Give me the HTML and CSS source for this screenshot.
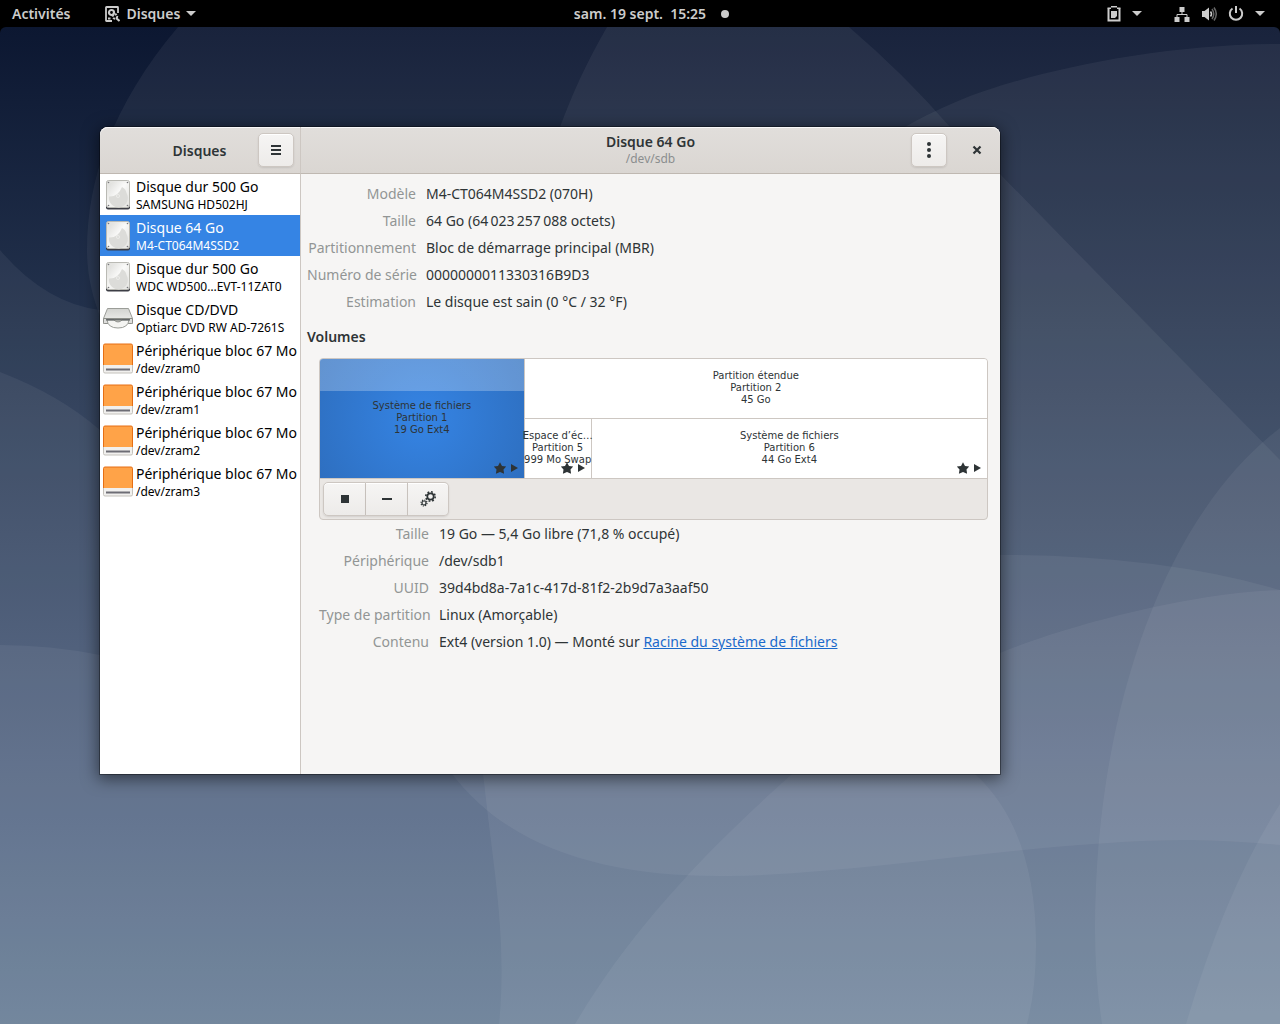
FILE: index.html
```html
<!DOCTYPE html>
<html lang="fr">
<head>
<meta charset="utf-8">
<meta name="viewport" content="width=device-width, initial-scale=1">
<title>Disques</title>
<link rel="stylesheet" href="styles.css">
</head>
<body>
<svg class="defs" aria-hidden="true">
  <defs>
    <linearGradient id="plate" x1="0" y1="0" x2="1" y2="1">
      <stop offset="0" stop-color="#dededb"/><stop offset=".5" stop-color="#f6f6f4"/><stop offset="1" stop-color="#e4e4e1"/>
    </linearGradient>
    <linearGradient id="shine" x1="0" y1="0" x2="1" y2="1">
      <stop offset="0" stop-color="#dcdcd9"/><stop offset=".5" stop-color="#fafaf9"/><stop offset="1" stop-color="#e2e2df"/>
    </linearGradient>
    <linearGradient id="tray" x1="0" y1="0" x2="0" y2="1">
      <stop offset="0" stop-color="#d2d3d0"/><stop offset="1" stop-color="#f2f2f0"/>
    </linearGradient>
    <symbol id="i-hdd" viewBox="0 0 32 32">
      <rect x="4" y="3" width="24" height="27.500" rx="2" fill="#3c3d45"/>
      <rect x="4.500" y="1.500" width="23" height="27" rx="2" fill="url(#plate)" stroke="#babab4"/>
      <path d="M7.500 5q3-3 8.500-2.500t8.500 2v9q2 8-3 11.500t-11 0q-5-4-3-10.500z" fill="url(#shine)"/>
      <path d="M24.500 14A9.500 9.500 0 1 1 7 17.500Q16 18 20 8q4 2 4.500 6z" fill="#dcdcd9"/>
      <circle cx="16" cy="17" r="1.800" fill="#f1f1ef"/><circle cx="16" cy="17" r=".8" fill="#c8c8c3"/>
      <g fill="#77777a"><circle cx="6.500" cy="3.500" r=".8"/><circle cx="25.500" cy="3.500" r=".8"/><circle cx="6.500" cy="26.500" r=".8"/><circle cx="25.500" cy="26.500" r=".8"/></g>
    </symbol>
    <symbol id="i-optical" viewBox="0 0 32 32">
      <path d="M5.500 6.500h21l4 10v5h-29v-5z" fill="url(#tray)" stroke="#9b9d98"/>
      <path d="M1.500 16.500h29v4q0 1-1 1h-27q-1 0-1-1z" fill="#dededc" stroke="#8d8f8a"/>
      <path d="M5 18h22q-1 8-11 8T5 18z" fill="#f4f4f2" stroke="#9a9c97"/>
      <path d="M4 17.800h24" stroke="#4d5154" stroke-width="1.200"/>
      <path d="M12 18q4 4 8 0z" fill="#b9bbb6" stroke="#777975" stroke-width=".7"/>
    </symbol>
    <symbol id="i-block" viewBox="0 0 32 32">
      <rect x="1.500" y="16" width="29" height="14" rx="1.500" fill="#f1f0ee" stroke="#c4c2bc"/>
      <path d="M1.500 22V2.500Q1.500 1 3 1h26q1.500 0 1.500 1.500V22z" fill="#ffa348"/>
      <path d="M1.500 22V2.500Q1.500 1 3 1h26q1.500 0 1.500 1.500V22" fill="none" stroke="#e66f14"/>
      <path d="M4 26.500h24" stroke="#6d6d75" stroke-width="2"/>
    </symbol>
    <symbol id="i-caret" viewBox="0 0 10 5"><path d="M0 0h10L5 5z" fill="currentColor"/></symbol>
    <symbol id="i-mounted" viewBox="0 0 28 12">
      <path d="M6 .3L8 4l4.200.6L9.500 7.500l.6 4.300L6 10l-4.100 1.800.6-4.300L-.2 4.600 4 4z" fill="currentColor"/>
      <path d="M17 2v8l7-4z" fill="currentColor"/>
    </symbol>
  </defs>
</svg>

<header class="topbar">
  <nav class="topbar-start">
    <button class="top-item" type="button">Activités</button>
    <button class="top-item app-menu" type="button">
      <svg class="glyph" viewBox="0 0 16 16" fill="none" stroke="currentColor">
        <path d="M8 15H2.500Q2 15 2 14.500v-13Q2 1 2.500 1h11Q14 1 14 1.500V7" stroke-width="1.800"/>
        <circle cx="7.500" cy="6.500" r="2.500" stroke-width="2.200"/>
        <circle cx="11" cy="10.500" r="2.200" stroke-width="2" stroke-dasharray="2 1"/>
        <path d="M12 12l3.500 3M4 12.500h2.500" stroke-width="2"/>
      </svg>
      Disques
      <svg class="caret"><use href="#i-caret"/></svg>
    </button>
  </nav>
  <button class="top-item clock" type="button">sam. 19 sept.&nbsp; 15:25<span class="dot"></span></button>
  <div class="topbar-end">
    <button class="top-item status" type="button" aria-label="Presse-papiers">
      <svg class="glyph" viewBox="0 0 16 16"><path d="M2.500 2.500v12h11v-12" fill="none" stroke="currentColor" stroke-width="2"/><path d="M5 0h6v3h3.500V1.500h-13V3H5zM5 5h6v5l-2 2H5z" fill="currentColor"/></svg>
      <svg class="caret"><use href="#i-caret"/></svg>
    </button>
    <button class="top-item status system" type="button" aria-label="Système">
      <svg class="glyph" viewBox="0 0 16 16" fill="currentColor"><path d="M5.500 1h5v5h-5zM.5 11h5v5h-5zM10.500 11h5v5h-5z"/><path d="M8 6v3M3 11V8.500h10V11" fill="none" stroke="currentColor"/></svg>
      <svg class="glyph" viewBox="0 0 16 16"><path d="M1 5h2.500L8 1.500v13L3.500 11H1z" fill="currentColor"/><path d="M9.500 5.500q2 2.500 0 5" fill="none" stroke="currentColor" stroke-width="1.500"/><path d="M11 3q3.500 5 0 10M13 1.500q4.500 6.500 0 13" fill="none" stroke="#666" stroke-width="1.500"/></svg>
      <svg class="glyph" viewBox="0 0 16 16" fill="none" stroke="currentColor" stroke-width="2"><path d="M4.500 2.500a6.200 6.200 0 1 0 7 0M8 0v7"/></svg>
      <svg class="caret"><use href="#i-caret"/></svg>
    </button>
  </div>
</header>

<main class="desktop">
  <svg class="wallpaper" viewBox="0 27 1280 997" preserveAspectRatio="none" aria-hidden="true">
    <g fill="#fff" fill-opacity=".055">
      <path d="M178 27C112 105 87 180 87 250C87 460 470 560 483 774C495 880 507 940 499 1024H1280V27z"/>
      <path d="M607 27C585 65 572 95 560 127C480 350 390 640 452 774C510 850 610 878 730 876C870 874 1040 840 1190 840Q1240 841 1280 845V460L1000 174Q975 150 950 127Q905 75 849 27z"/>
      <path d="M1280 44C1150 44 1020 75 958 101Q925 115 905 127C850 300 880 650 792 774C690 865 625 940 575 1024H1280z"/>
      <path d="M0 250Q45 303 100 310C300 320 700 555 1000 555Q1160 555 1280 590V1024H0z"/>
      <path d="M0 372Q60 395 100 430C300 600 700 760 1000 653C1060 628 1190 592 1280 590V1024H0z"/>
      <path d="M0 645Q50 645 100 655C300 680 700 640 975 774Q1036 830 1036 945Q1036 990 1027 1024H0z"/>
      <path d="M1280 428C1160 520 1095 720 1095 929Q1095 980 1102 1024H1280z"/>
      <path d="M1280 804Q1225 890 1186 1024H1280z"/>
    </g>
  </svg>

  <section class="window" aria-label="Disques">
    <div class="head head-side">
      <h2 class="title side-title">Disques</h2>
      <button class="btn head-btn" type="button" aria-label="Menu">
        <svg class="icon" viewBox="0 0 16 16"><path d="M3 4h10M3 8h10M3 12h10" stroke="currentColor" stroke-width="2"/></svg>
      </button>
    </div>
    <div class="head head-main">
      <div class="head-title">
        <h1 class="title">Disque 64 Go</h1>
        <p class="subtitle">/dev/sdb</p>
      </div>
      <div class="head-actions">
        <button class="btn head-btn" type="button" aria-label="Options du disque">
          <svg class="icon" viewBox="0 0 16 16" fill="currentColor"><circle cx="8" cy="2" r="2"/><circle cx="8" cy="8" r="2"/><circle cx="8" cy="14" r="2"/></svg>
        </button>
        <button class="close" type="button" aria-label="Fermer">
          <svg class="icon" viewBox="0 0 16 16"><path d="M4.500 4.500l7 7M11.500 4.500l-7 7" stroke="currentColor" stroke-width="2.200"/></svg>
        </button>
      </div>
    </div>

    <nav class="devices">
      <button class="device" type="button"><svg class="dev-icon"><use href="#i-hdd"/></svg><span class="dev-text"><span class="dev-name">Disque dur 500 Go</span><span class="dev-model">SAMSUNG HD502HJ</span></span></button>
      <button class="device selected" type="button"><svg class="dev-icon"><use href="#i-hdd"/></svg><span class="dev-text"><span class="dev-name">Disque 64 Go</span><span class="dev-model">M4-CT064M4SSD2</span></span></button>
      <button class="device" type="button"><svg class="dev-icon"><use href="#i-hdd"/></svg><span class="dev-text"><span class="dev-name">Disque dur 500 Go</span><span class="dev-model">WDC WD500…EVT-11ZAT0</span></span></button>
      <button class="device" type="button"><svg class="dev-icon"><use href="#i-optical"/></svg><span class="dev-text"><span class="dev-name">Disque CD/DVD</span><span class="dev-model">Optiarc DVD RW AD-7261S</span></span></button>
      <button class="device" type="button"><svg class="dev-icon"><use href="#i-block"/></svg><span class="dev-text"><span class="dev-name">Périphérique bloc 67 Mo</span><span class="dev-model">/dev/zram0</span></span></button>
      <button class="device" type="button"><svg class="dev-icon"><use href="#i-block"/></svg><span class="dev-text"><span class="dev-name">Périphérique bloc 67 Mo</span><span class="dev-model">/dev/zram1</span></span></button>
      <button class="device" type="button"><svg class="dev-icon"><use href="#i-block"/></svg><span class="dev-text"><span class="dev-name">Périphérique bloc 67 Mo</span><span class="dev-model">/dev/zram2</span></span></button>
      <button class="device" type="button"><svg class="dev-icon"><use href="#i-block"/></svg><span class="dev-text"><span class="dev-name">Périphérique bloc 67 Mo</span><span class="dev-model">/dev/zram3</span></span></button>
    </nav>

    <div class="content">
      <dl class="facts">
        <dt>Modèle</dt><dd>M4-CT064M4SSD2 (070H)</dd>
        <dt>Taille</dt><dd>64 Go (64&#8239;023&#8239;257&#8239;088 octets)</dd>
        <dt>Partitionnement</dt><dd>Bloc de démarrage principal (MBR)</dd>
        <dt>Numéro de série</dt><dd>0000000011330316B9D3</dd>
        <dt>Estimation</dt><dd>Le disque est sain (0 °C / 32 °F)</dd>
      </dl>
      <h3 class="section">Volumes</h3>
      <div class="volume-area">
        <div class="volumes">
          <div class="grid">
            <button class="part current" type="button"><span>Système de fichiers</span><span>Partition 1</span><span>19 Go Ext4</span><svg class="badge"><use href="#i-mounted"/></svg></button>
            <button class="part extended" type="button"><span>Partition étendue</span><span>Partition 2</span><span>45 Go</span></button>
            <div class="logical">
              <button class="part swap" type="button"><span>Espace d’éc…</span><span>Partition 5</span><span>999 Mo Swap</span><svg class="badge"><use href="#i-mounted"/></svg></button>
              <button class="part" type="button"><span>Système de fichiers</span><span>Partition 6</span><span>44 Go Ext4</span><svg class="badge"><use href="#i-mounted"/></svg></button>
            </div>
          </div>
          <div class="toolbar">
            <button class="btn tool" type="button" aria-label="Démonter"><svg class="icon" viewBox="0 0 16 16"><path d="M4 4h8v8H4z" fill="currentColor"/></svg></button>
            <button class="btn tool" type="button" aria-label="Supprimer"><svg class="icon" viewBox="0 0 16 16"><path d="M3 7h10v2H3z" fill="currentColor"/></svg></button>
            <button class="btn tool" type="button" aria-label="Options"><svg class="icon" viewBox="0 0 16 16" fill="none" stroke="currentColor"><circle cx="10.500" cy="5.500" r="3.200" stroke-width="1.700"/><circle cx="10.500" cy="5.500" r="4.700" stroke-width="1.600" stroke-dasharray="1.800 1.890"/><circle cx="4" cy="12" r="2" stroke-width="1.200"/><circle cx="4" cy="12" r="3" stroke-width="1.200" stroke-dasharray="1.150 1.200"/></svg></button>
          </div>
        </div>
        <dl class="facts">
          <dt>Taille</dt><dd>19 Go — 5,4 Go libre (71,8 % occupé)</dd>
          <dt>Périphérique</dt><dd>/dev/sdb1</dd>
          <dt>UUID</dt><dd>39d4bd8a-7a1c-417d-81f2-2b9d7a3aaf50</dd>
          <dt>Type de partition</dt><dd>Linux (Amorçable)</dd>
          <dt>Contenu</dt><dd>Ext4 (version 1.0) — Monté sur <a href="#racine">Racine du système de fichiers</a></dd>
        </dl>
      </div>
    </div>
  </section>
</main>
</body>
</html>
```
FILE: styles.css
```css
* { box-sizing: border-box; }

body {
  margin: 0;
  min-height: 100vh;
  display: flex;
  flex-direction: column;
  background: #000;
  color: #2e3436;
  font: 14px/17px "Noto Sans", "Open Sans", sans-serif;
}

button {
  margin: 0;
  padding: 0;
  border: 0;
  background: none;
  color: inherit;
  font: inherit;
}

h1, h2, h3, p, dl, dd { margin: 0; }

.defs { position: absolute; width: 0; height: 0; }

/* Top bar */
.topbar {
  display: grid;
  grid-template-columns: 1fr auto 1fr;
  height: 27px;
  padding: 0 15px 0 12px;
  color: #ccc;
  font-weight: 600;
}
.topbar-start, .topbar-end { display: flex; }
.topbar-start { gap: 34px; }
.topbar-end { justify-content: flex-end; gap: 32px; }
.top-item { display: flex; align-items: center; white-space: nowrap; }
.app-menu { gap: 6px; }
.status { gap: 10px; }
.system { gap: 11px; }
.glyph { width: 16px; height: 16px; }
.caret { width: 10px; height: 5px; }
.clock { gap: 15px; padding-left: 26px; }
.dot { width: 8px; height: 8px; border-radius: 50%; background: #ccc; }

/* Desktop */
.desktop {
  position: relative;
  flex: 1;
  overflow: hidden;
  padding: 100px 280px 100px 100px;
  border-radius: 6px 6px 0 0;
  background: linear-gradient(#0c1731, #293954 37%, #475a7a 75%, #5a728d);
}
.wallpaper { position: absolute; inset: 0; width: 100%; height: 100%; }

/* Window */
.window {
  position: relative;
  display: grid;
  grid-template-columns: 201px 1fr;
  grid-template-rows: 47px 1fr;
  min-height: 647px;
  border-radius: 8px 8px 0 0;
  background: #f6f5f4;
  box-shadow: 0 0 0 1px rgba(0, 0, 0, .35), 0 3px 16px 2px rgba(0, 0, 0, .5);
}
.head {
  display: flex;
  align-items: center;
  border-bottom: 1px solid #bfb8b1;
  background: linear-gradient(#e1dedb, #dad6d2);
  box-shadow: inset 0 1px #f9f8f8;
}
.head-side {
  padding: 0 6px;
  border-right: 1px solid #cdc7c2;
  border-radius: 8px 0 0;
}
.head-main {
  display: grid;
  grid-template-columns: 1fr auto 1fr;
  padding: 0 6px;
  border-radius: 0 8px 0 0;
}
.head-title { grid-column: 2; text-align: center; }
.head-actions { display: flex; justify-content: flex-end; gap: 13px; }
.title { font-size: 14px; font-weight: 600; line-height: 17px; }
.side-title { flex: 1; padding-left: 35px; text-align: center; }
.subtitle { color: #8b8e8f; font-size: 12px; line-height: 18px; }
.btn {
  display: flex;
  align-items: center;
  justify-content: center;
  height: 34px;
  border: 1px solid #cdc7c2;
  border-radius: 5px;
  background: linear-gradient(#f6f5f4, #edebe9);
  box-shadow: inset 0 1px #fff, 0 1px 2px rgba(0, 0, 0, .1);
}
.head-btn { width: 36px; }
.close { display: flex; align-items: center; justify-content: center; width: 34px; height: 34px; }
.icon { width: 16px; height: 16px; }

/* Device list */
.devices { border-right: 1px solid #cdc7c2; background: #fff; }
.device {
  display: flex;
  align-items: center;
  gap: 2px;
  width: 100%;
  height: 41px;
  padding-left: 2px;
  color: #000;
  text-align: left;
}
.device.selected { background: #3584e4; color: #fff; }
.dev-icon { flex: none; width: 32px; height: 32px; }
.dev-text { display: flex; flex-direction: column; padding-top: 2px; line-height: 18px; white-space: nowrap; }
.dev-model { font-size: 12px; }

/* Drive details */
.content { min-width: 0; padding: 11px 12px 12px 6px; }
.facts {
  display: grid;
  grid-template-columns: 109px 1fr;
  gap: 10px;
}
.facts dt { color: #929595; text-align: right; white-space: nowrap; }
.facts a { color: #1b6acb; }
.section { margin: 18px 0 13px; font-size: 14px; font-weight: 600; line-height: 17px; }
.volume-area { padding-left: 12px; }
.volume-area .facts { grid-template-columns: 110px 1fr; }
.volumes {
  overflow: hidden;
  margin-bottom: 5px;
  border: 1px solid #cdc7c2;
  border-radius: 4px;
  background: #eae7e4;
}
.grid {
  display: grid;
  grid-template-columns: 205fr 463fr;
  grid-template-rows: 60px 59px;
  border-bottom: 1px solid #cdc7c2;
  background: #fff;
}
.logical { display: grid; grid-template-columns: 67fr 396fr; min-width: 0; }
.part {
  position: relative;
  display: flex;
  flex-direction: column;
  align-items: center;
  justify-content: center;
  min-width: 0;
  padding-bottom: 2px;
  font: 10px/12px "DejaVu Sans", sans-serif;
  white-space: nowrap;
}
.current {
  grid-row: 1 / 3;
  border-right: 1px solid #cdc7c2;
  background:
    linear-gradient(rgba(255, 255, 255, .25), rgba(255, 255, 255, .25)) 0 0 / 100% 32px no-repeat,
    radial-gradient(circle farthest-corner, #3584e4, #2e6fc0);
}
.extended { border-bottom: 1px solid #cdc7c2; }
.swap { border-right: 1px solid #cdc7c2; }
.badge { position: absolute; right: 2px; bottom: 4px; width: 28px; height: 12px; }

.toolbar { display: flex; padding: 3px; }
.tool { width: 42px; }
.tool:first-child { width: 43px; }
.tool:last-child { width: 41px; }
.tool:not(:first-child) { border-left: 0; border-top-left-radius: 0; border-bottom-left-radius: 0; }
.tool:not(:last-child) { border-top-right-radius: 0; border-bottom-right-radius: 0; }
```
